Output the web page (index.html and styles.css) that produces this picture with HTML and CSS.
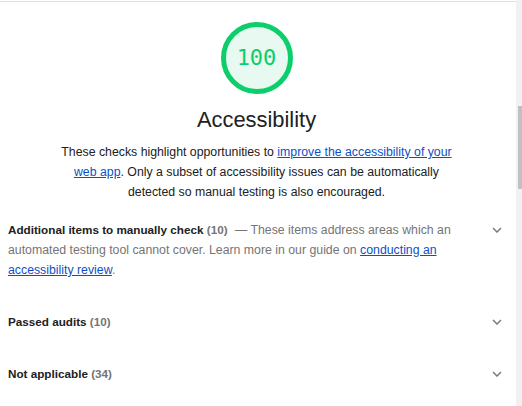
FILE: index.html
```html
<!DOCTYPE html>
<html lang="en">
<head>
<meta charset="utf-8">
<title>Accessibility</title>
<link rel="stylesheet" href="styles.css">
</head>
<body>
<div class="page">
  <main class="report">
    <div class="topline"></div>
    <header class="category-header">
      <div class="gauge"><span class="score">100</span></div>
      <h1 class="title">Accessibility</h1>
      <p class="desc">These checks highlight opportunities to <a href="#">improve the accessibility of your web app</a>. Only a subset of accessibility issues can be automatically detected so manual testing is also encouraged.</p>
    </header>
    <section class="group">
      <div class="group-text"><span class="group-title">Additional items to manually check</span> <span class="count">(10)</span><span class="group-desc"> — These items address areas which an automated testing tool cannot cover. Learn more in our guide on <a href="#">conducting an accessibility review</a>.</span></div>
      <span class="chevron"><svg width="10" height="6" viewBox="0 0 10 6"><polyline points="1,1 5,5 9,1" fill="none" stroke="#7a7a7a" stroke-width="1.5"/></svg></span>
    </section>
    <section class="group">
      <div class="group-text"><span class="group-title">Passed audits</span> <span class="count">(10)</span></div>
      <span class="chevron"><svg width="10" height="6" viewBox="0 0 10 6"><polyline points="1,1 5,5 9,1" fill="none" stroke="#7a7a7a" stroke-width="1.5"/></svg></span>
    </section>
    <section class="group">
      <div class="group-text"><span class="group-title">Not applicable</span> <span class="count">(34)</span></div>
      <span class="chevron"><svg width="10" height="6" viewBox="0 0 10 6"><polyline points="1,1 5,5 9,1" fill="none" stroke="#7a7a7a" stroke-width="1.5"/></svg></span>
    </section>
  </main>
  <div class="scrollbar"><div class="thumb"></div></div>
</div>
</body>
</html>
```
FILE: styles.css
```css
html, body {
  margin: 0;
  padding: 0;
  background: #fff;
}
body {
  font-family: "Liberation Sans", Arial, sans-serif;
  color: #212121;
}
.page {
  display: flex;
  height: 406px;
  overflow: hidden;
}
.report {
  flex: 1;
  min-width: 0;
  padding-top: 1px;
}
.topline {
  height: 1px;
  background: #e0e0e0;
}
.category-header {
  display: flex;
  flex-direction: column;
  align-items: center;
  padding-right: 3px;
}
.gauge {
  margin-top: 20px;
  width: 72px;
  height: 72px;
  box-sizing: border-box;
  border-radius: 50%;
  border: 5px solid #0cce6b;
  background: #e7f9f0;
  display: flex;
  align-items: center;
  justify-content: center;
}
.score {
  font-family: "DejaVu Sans Mono", monospace;
  font-size: 22px;
  color: #0cce6b;
  line-height: 1;
}
.title {
  margin: 13px 0 0;
  font-size: 21.9px;
  line-height: 26px;
  font-weight: normal;
  color: #212121;
}
.desc {
  margin: 9px 0 2px;
  max-width: 404px;
  text-align: center;
  font-size: 12.3px;
  line-height: 20px;
}
a {
  color: #0c50c7;
  text-decoration: underline;
}
.group {
  display: flex;
  align-items: flex-start;
  gap: 20px;
  padding: 16px 14px 16px 8px;
  font-size: 11.7px;
  line-height: 20px;
}
.group-text {
  flex: 1;
  min-width: 0;
}
.group-title {
  font-weight: bold;
  color: #212121;
}
.count {
  font-weight: bold;
  color: #757575;
}
.group-desc {
  color: #757575;
  font-size: 12.3px;
  margin-left: 4px;
}
.chevron {
  width: 10px;
  height: 20px;
  display: flex;
  align-items: center;
  justify-content: center;
  flex: none;
}
.chevron svg {
  display: block;
}
.scrollbar {
  flex: none;
  width: 4px;
  padding-left: 2px;
  background: #f1f1f1;
}
.thumb {
  margin-top: 106px;
  height: 83px;
  width: 4px;
  background: #c1c1c1;
}
```
